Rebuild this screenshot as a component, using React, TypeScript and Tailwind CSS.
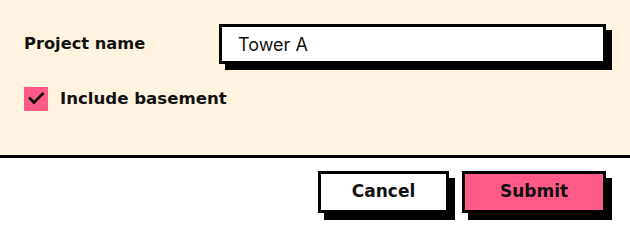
import React from "react";

export default function App() {
  return (
    <div className="w-[630px] h-[232px] bg-white" style={{ fontFamily: "Inter, 'Liberation Sans', sans-serif" }}>
      <div className="bg-[#fff2df] border-b-[3px] border-black px-6 pt-6 h-[158px]">
        <div className="flex items-center">
          <label className="w-[195px] text-[16.25px] font-bold text-[#111] font-['DejaVu_Sans',sans-serif]">Project name</label>
          <div className="relative flex-1">
            <div className="absolute left-[6px] top-[6px] w-full h-[40px] bg-black" />
            <input
              defaultValue="Tower A"
              className="relative w-full h-[40px] border-[3px] border-black bg-white pl-4 text-[18px] text-[#111] outline-none"
            />
          </div>
        </div>
        <div className="flex items-center mt-[23px] gap-3">
          <div className="w-6 h-6 bg-[#ff5a88]">
            <svg width="24" height="24" viewBox="0 0 24 24" fill="none">
              <path d="M6 11.5L10 15.5L18.5 7" stroke="#111" strokeWidth="2.8" strokeLinecap="square" />
            </svg>
          </div>
          <span className="text-[16.6px] font-bold text-[#111] font-['DejaVu_Sans',sans-serif]">Include basement</span>
        </div>
      </div>
      <div className="flex justify-end gap-[13px] px-6 pt-[13px]">
        <div className="relative">
          <div className="absolute left-[6px] top-[7px] w-[131px] h-[42px] bg-black" />
          <button className="relative w-[131px] h-[42px] border-[3px] border-black bg-white text-[17px] font-bold text-[#111] font-['DejaVu_Sans',sans-serif]">Cancel</button>
        </div>
        <div className="relative">
          <div className="absolute left-[6px] top-[7px] w-[144px] h-[42px] bg-black" />
          <button className="relative w-[144px] h-[42px] border-[3px] border-black bg-[#ff5a88] text-[17px] font-bold text-[#111] font-['DejaVu_Sans',sans-serif]">Submit</button>
        </div>
      </div>
    </div>
  );
}
